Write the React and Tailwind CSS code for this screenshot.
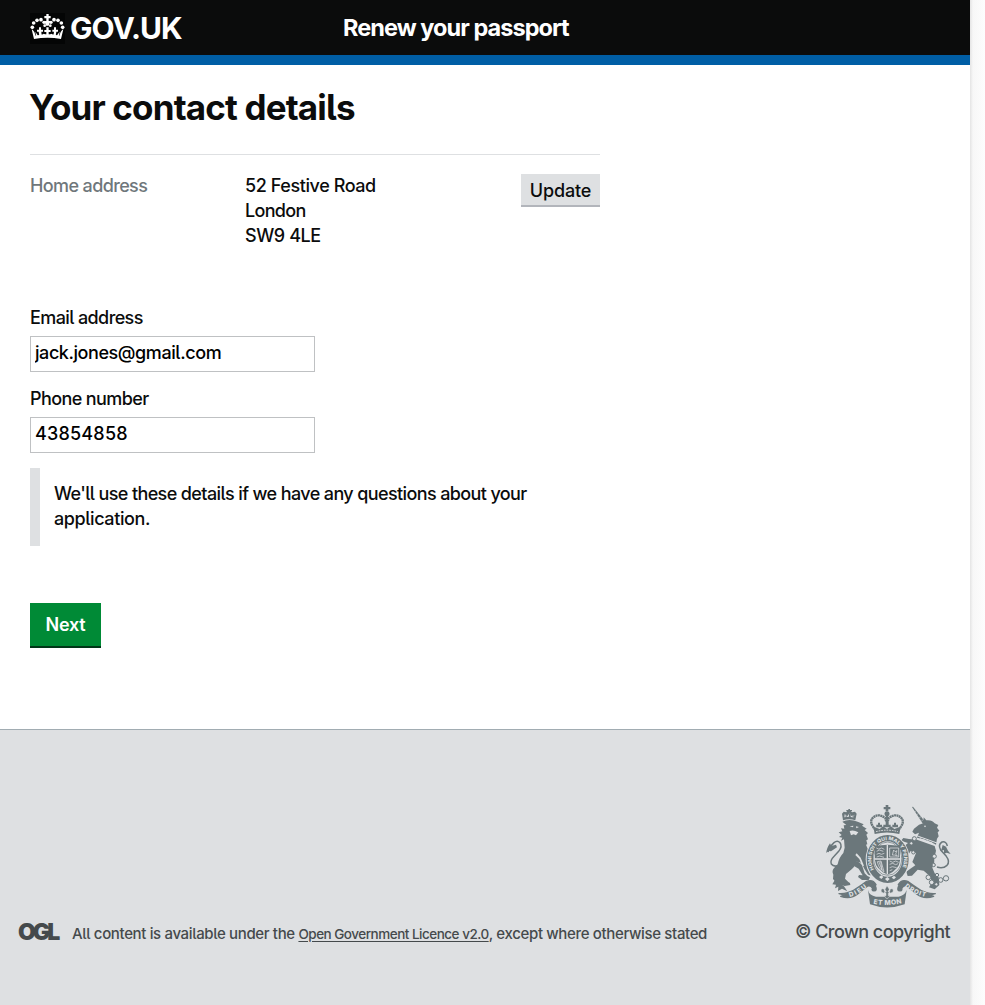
import React from 'react';

function Crown() {
  const dots = [[97, 82, 5.5], [101, 69, 5.5], [111, 61, 5.5], [123, 59, 5.5], [132, 67, 5], [134, 77, 4]];
  return (
    <svg className="h-[31px] w-[35px] shrink-0" viewBox="90 39 105 93" fill="#fff">
      <rect x="90" y="39" width="105" height="93" fill="#040505" />
      <path d="M139 42h7v6h6v7h-6v8h5l-5 14h-8l-5-14h6v-8h-6v-7h6z" />
      {dots.map(([x, y, r]) => (
        <g key={x}>
          <circle cx={x} cy={y} r={r} />
          <circle cx={285 - x} cy={y} r={r} />
        </g>
      ))}
      <path d="M95 88q4 2 8 8l4 11q35-8 71 0l4-11q4-6 8-8l-7 29q-40-7-81 0z" />
      <path d="M139 82h7v8h6v6h-6v12h-7v-12h-6v-6h6zM117 82h6v7h6v6h-5l1 13h-7l-2-13h-5v-6h6zM162 82h6v7h6v6h-5l-2 13h-7l2-13h-5v-6h5z" />
      <path d="M106 95l8 12h12l5-6 8 5h8l8-5 5 6h10l9-12-3 15q-34-6-67 0z" />
    </svg>
  );
}

function Crest() {
  return (
    <svg className="h-[104px] w-[127px]" viewBox="45 42 381 312" fill="#6b777b" stroke="none">
      <defs>
        <path id="garter" d="M193 240A49 57 0 1 1 273 240" />
        <path id="motto-left" d="M119 321Q147 314 178 286" />
        <path id="motto-mid" d="M186 340Q231 351 282 338" />
        <path id="motto-right" d="M284 290Q312 315 356 323" />
      </defs>

      {/* lion */}
      <path d="M99 91l-3-20 5-6 8 2 2-4h-2v-3h6v-3h5v3h6v3h-3l3 4 9-2 5 6-4 20q-18-6-37 0z" />
      <path d="M103 82l1-9 9 5 6-10 5 10 9-4-2 9q-14-5-28-1z" fill="#dee0e2" />
      <path d="M117 70h5v14h-5zM107 75h3v9h-3zM128 75h3v9h-3z" />
      <path d="M97 95q21-10 48 1l16 7-5 4 14 9-6 4 10 9-5 5 5 14-5 3 3 12-4 1 9 22 10 13-4 7 5 12-8-2-3 18 9 9-1 11q-7 4-12-2l-10-16-8-16-8-4-9-1q-1 12-13 23l-17 14-3 14 10 10q7 2 6 9l-17 3-22-7-13-14 1-13q-6-12 3-21l10-10q4-21 17-34l4-16-2-25-9 4 4-9-10-2 8-6-9-8 11-3-4-9 10 1-2-10 8-1z" />
      <path d="M119 109l11-2-1 5zM138 109l9 2-8 4zM119 123q12-4 26 4l-7 9-7-3-8 3zM140 190l12 13 10 24-5 2-9-22-12-12z" fill="#dee0e2" />
      <path d="M136 213q14 2 20 13l8 24q6 8 16 12l-4 8-20 0-12-9 3-6 11 1-12-20-14-8z" />
      <path d="M89 225q-17 8-25-3-5-10 9-24l13-14q12-16 4-26-8-8-18 0-12 10-18 28" fill="none" stroke="#6b777b" strokeWidth="4.5" />
      <path d="M60 160l4 8 14-4 3 8-18 12-7-2-7 7q0-13 11-29z" />
      <path d="M75 269l-8 14 11 1-3 11 10-5-1 13 12-7 16 8-10-15z" />

      {/* unicorn */}
      <path d="M306 51l3-1 37 46-7 6z" />
      <path d="M313 66l5-3M319 75l6-4M327 84l6-4M334 93l6-4" stroke="#dee0e2" strokeWidth="1.5" />
      <path d="M340 100l1-18 8 9q17-2 25 9l11 5-4 8 7 9-5 5 3 12-5 7-3 18-15-8-25-9-17-4 6-15-12 5-8-8 5-9 15-12z" />
      <path d="M323 138l58 21M320 148l54 19" stroke="#dee0e2" strokeWidth="3" />
      <path d="M330 141l5 11 6-5 6 10 6-5 6 10 6-5 4 9" fill="none" stroke="#dee0e2" strokeWidth="2" />
      <circle cx="345" cy="109" r="2.5" fill="#dee0e2" />
      <path d="M321 149l53 19 4 14-5 23q2 15-6 28l7 17 12 12 2 23-14 13-17-6 9-15-6-18-19-17-18-3-17 18-13 1-4-13 11-8 16-11-9-10 11-27-16-6-9 14 4 14-13-4-10-14 7-10-11-7-2-15 10-3 8 8 8-7-21-7 7-8 17 3z" />
      <path d="M381 231q18 6 30-5 10-11-2-27l-17-19q-9-16 4-24 13-3 16 12" fill="none" stroke="#6b777b" strokeWidth="4.5" />
      <path d="M398 165l10 5 6 12 8 10-12-4-8 3 0-11-9 3z" />
      <g fill="#dee0e2" stroke="#6b777b" strokeWidth="3">
        <circle cx="313" cy="146" r="6" /><circle cx="304" cy="160" r="5" /><circle cx="310" cy="187" r="5" />
        <circle cx="373" cy="199" r="6" /><circle cx="371" cy="225" r="5" /><circle cx="355" cy="262" r="7" />
        <circle cx="381" cy="255" r="5" /><circle cx="365" cy="277" r="7" /><circle cx="392" cy="270" r="7" /><circle cx="408" cy="265" r="8" />
        <circle cx="379" cy="283" r="5" />
      </g>

      {/* royal crown */}
      <path d="M227 45h8v6h6v7h-6v6h-8v-6h-6v-7h6z" />
      <circle cx="231" cy="71" r="7.5" />
      <path d="M196 119q-20-22-8-35 16-16 38 0l3 12M266 119q20-22 8-35-16-16-38 0l-3 12" fill="none" stroke="#6b777b" strokeWidth="7" strokeDasharray="6 1.2" />
      <path d="M228 74h6v30h-6zM227 96h9v8h6v8h-22v-8h7zM204 98h6v6h6v8h-17v-8h5zM252 98h6v6h6v8h-17v-8h5z" />
      <path d="M190 110l11 4 8 3 10-8 12 8 12-8 10 8 8-3 11-4-4 22q-37-9-74 0z" />
      <path d="M198 125q33-9 66 0" fill="none" stroke="#dee0e2" strokeWidth="3" strokeDasharray="5 3" />

      {/* garter */}
      <ellipse cx="233" cy="208" rx="66" ry="76" fill="#dee0e2" />
      <ellipse cx="233" cy="207" rx="53.5" ry="62.5" fill="none" stroke="#6b777b" strokeWidth="19" />
      <ellipse cx="233" cy="206" rx="42" ry="50" fill="#dee0e2" stroke="#6b777b" strokeWidth="2" />
      <text fill="#dee0e2" fontFamily="Inter, sans-serif" fontWeight="800" fontSize="14.5">
        <textPath href="#garter" startOffset="2" textLength="224" lengthAdjust="spacingAndGlyphs">HONI SOIT QUI MAL Y PENSE</textPath>
      </text>
      <path d="M207 261l7-5 6 5-6 6zM225 267l7-6 7 6-7 7zM245 263l7-6 6 5-6 6z" fill="#dee0e2" />
      <path d="M195 169q38-10 75 0v42q-2 28-37 43-36-15-38-43z" />
      <path d="M232 165v88M195 207h76" stroke="#dee0e2" strokeWidth="4" />
      <g fill="none" stroke="#dee0e2" strokeWidth="2.2">
        <path d="M199 174l7 3 9-3 8 4M200 184l8-4 12 4M200 193l7-3 7 3 9-3M200 201l9-3 13 4" />
        <path d="M239 213l9 4 9-4 9 4M239 223l9-3 9 4 7-3M239 233l8-3 13 3M239 242l8-3" />
        <path d="M239 174h27v27h-27zM247 195l4-15 4 5 6-3-4 10 5 6-9-3z" />
        <path d="M202 215l11-2 9 32q-15-6-20-30M207 216l9 24M212 215l4 25" />
      </g>

      {/* motto ribbon and fleur-de-lis */}
      <g stroke="#6b777b" strokeWidth="4" strokeLinejoin="round">
        <path d="M87 311q14 1 26-3 18-5 37-20l18-13q20-9 30 9-9 8-6 17l-9-12q-8-4-14 2l-25 20q-22 18-52 8l13-4zM376 311q-14 1-26-3-18-5-37-20l-18-13q-20-9-30 9 9 8 6 17l9-12q8-4 14 2l25 20q22 18 52 8l-13-4z" />
      </g>
      <path d="M174 300q4 17 24 20h68q18-3 24-20l-6 43q-53 19-104 0z" />
      <path d="M198 287q9 20-11 17l-3-5 5-9zM264 287q-9 20 11 17l3-5-5-9z" />
      <path d="M231 287l7 11-4 8q8 0 6-8 12-6 9 8l-8 4-2-4-4 4v7h5l-6 8h-6l-5-8h5v-7l-4-4-2 4-8-4q-3-14 9-8-2 8 6 8l-4-8z" stroke="#dee0e2" strokeWidth="1.5" />
      <g fill="#dee0e2" fontFamily="Inter, sans-serif" fontWeight="800" fontSize="20">
        <text fontSize="19"><textPath href="#motto-left" textLength="60">DIEU</textPath></text>
        <text><textPath href="#motto-mid" startOffset="4" textLength="86">ET MON</textPath></text>
        <text fontSize="19"><textPath href="#motto-right" textLength="70">DROIT</textPath></text>
      </g>
    </svg>
  );
}

function Field({ label, value, valueClass }) {
  return (
    <label className="flex flex-col">
      <span className="h-[25px] tracking-[-0.6px]">{label}</span>
      <input
        readOnly
        value={value}
        className={`mt-[6px] h-9 w-[285px] rounded-none border border-[#bfc1c3] bg-white px-1 pb-[3px] text-black outline-none ${valueClass}`}
      />
    </label>
  );
}

export default function App() {
  return (
    <div className="flex h-[1005px] w-[985px] overflow-hidden bg-white font-['Inter',sans-serif] text-[18px] leading-[25px] font-[450] text-[#0b0c0c] [font-feature-settings:'cv05']">
      <div className="flex w-[970px] flex-col">
        <header className="flex h-[65px] items-start border-b-10 border-[#005ea5] bg-[#0b0c0c] pl-[30px] text-white">
          <div className="flex w-[313px] items-start gap-[5px] pt-[13px]">
            <Crown />
            <span className="text-[30px] leading-[31px] font-bold tracking-[-1px]">GOV.UK</span>
          </div>
          <span className="pt-[13px] text-[23.5px] leading-[30px] font-bold tracking-[-0.95px]">Renew your passport</span>
        </header>

        <main className="flex h-[664px] w-[630px] flex-col px-[30px]">
          <h1 className="-ml-px pt-[22px] text-[35px] leading-[40px] font-bold tracking-[-0.84px]">Your contact details</h1>

          <section className="mt-[27px] flex items-start border-t border-[#dee0e2] pt-[18px]">
            <div className="w-[215px] tracking-[-0.62px] text-[#6f777b]">Home address</div>
            <address className="flex-1 tracking-[-0.42px] not-italic">
              52 Festive Road<br /><span className="tracking-[-0.7px]">London</span><br />SW9 4LE
            </address>
            <button className="mt-px flex h-[33px] w-[79px] items-center justify-center border-b-2 border-[#b2b5bb] bg-[#dee0e2] pt-[2px] tracking-[-0.15px]">Update</button>
          </section>

          <form className="mt-[57px] flex flex-col gap-[14px]">
            <Field label="Email address" value="jack.jones@gmail.com" valueClass="tracking-[-0.43px]" />
            <Field label="Phone number" value="43854858" valueClass="tracking-[0.2px]" />
          </form>

          <p className="mt-[15px] h-[78px] border-l-10 border-[#dee0e2] pt-[13px] pl-[14px] tracking-[-0.615px]">
            We'll use these details if we have any questions about your <span className="tracking-[-0.4px]">application.</span>
          </p>

          <button className="mt-[57px] h-[45px] w-[71px] border-b-2 border-[#003618] bg-[#008a36] pb-px font-semibold tracking-[-0.2px] text-white">Next</button>
        </main>

        <footer className="flex flex-1 items-start justify-between border-t border-[#a1acb2] bg-[#dee0e2] pr-[18px] pl-[18px] text-[#454a4c]">
          <div className="flex items-start pt-[190px]">
            <span className="w-[54px] text-[23px] leading-[24px] font-black tracking-[-3px]">OGL</span>
            <p className="pt-[2px] text-[15px] leading-[24px] font-medium tracking-[-0.35px] whitespace-nowrap">
              All content is available under the{' '}
              <a className="text-[13.5px] font-[450] tracking-[-0.5px] underline underline-offset-2" href="#licence">Open Government Licence v2.0</a>
              , except where otherwise stated
            </p>
          </div>
          <div className="flex flex-col items-end pt-[74px]">
            <Crest />
            <span className="mt-[11px] mr-[2px] tracking-[-0.56px]">© Crown copyright</span>
          </div>
        </footer>
      </div>
      <div className="flex-1 bg-linear-to-r from-[#e4e4e4] via-[#f7f7f7] via-20% to-[#fdfdfd]" />
    </div>
  );
}
